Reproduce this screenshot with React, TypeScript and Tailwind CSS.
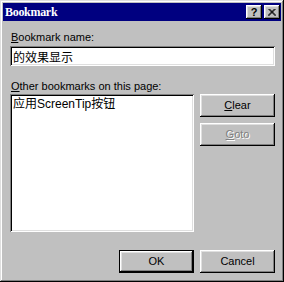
import { ReactNode } from "react";

const raised =
  "shadow-[inset_-1px_-1px_#000000,inset_1px_1px_#ffffff,inset_-2px_-2px_#808080,inset_2px_2px_#dfdfdf]";
const sunken =
  "shadow-[inset_1px_1px_#808080,inset_-1px_-1px_#ffffff,inset_2px_2px_#000000,inset_-2px_-2px_#dfdfdf]";

const Button = ({
  children,
  isDefault,
  disabled,
}: {
  children: ReactNode;
  isDefault?: boolean;
  disabled?: boolean;
}) => {
  const face = (
    <div
      className={`flex h-full w-full items-center justify-center bg-[#c0c0c0] ${raised} ${
        disabled ? "text-[#808080] [text-shadow:1px_1px_#ffffff]" : "text-black"
      }`}
    >
      {children}
    </div>
  );
  if (isDefault) {
    return <div className="h-[23px] w-[75px] border border-black">{face}</div>;
  }
  return <div className="h-[23px] w-[75px]">{face}</div>;
};

const TitleButton = ({ children }: { children: ReactNode }) => (
  <div
    className={`flex h-[14px] w-[16px] items-center justify-center bg-[#c0c0c0] ${raised}`}
  >
    {children}
  </div>
);

const App = () => {
  return (
    <div
      className="h-[282px] w-[284px] bg-[#c0c0c0] p-[3px] text-[11px] leading-[13px] text-black shadow-[inset_-1px_-1px_#000000,inset_1px_1px_#dfdfdf,inset_-2px_-2px_#808080,inset_2px_2px_#ffffff]"
      style={{ fontFamily: '"Liberation Sans", "Noto Sans CJK SC", sans-serif' }}
    >
      <div className="flex h-[18px] items-center justify-between bg-[#000080] pl-[2px] pr-[1px]">
        <span
          className="text-[12px] font-bold tracking-[-0.3px] text-white"
          style={{ fontFamily: '"Liberation Serif", serif' }}
        >
          Bookmark
        </span>
        <div className="flex gap-[2px]">
          <TitleButton>
            <span className="text-[11px] font-bold leading-none">?</span>
          </TitleButton>
          <TitleButton>
            <svg width="8" height="7" viewBox="0 0 8 7">
              <path d="M0.5 0 L7.5 7 M1.5 0 L8 6.5 M7.5 0 L0.5 7 M6.5 0 L0 6.5" stroke="#000" strokeWidth="1" />
            </svg>
          </TitleButton>
        </div>
      </div>

      <div className="flex flex-col pl-[7px] pr-[6px] pt-[10px]">
        <div className="pl-[1px]">
          <span className="underline">B</span>ookmark name:
        </div>
        <div className={`mt-[2px] flex h-[20px] items-center bg-white pl-[3px] ${sunken}`}>
          <span className="text-[12px]" style={{ fontFamily: '"Noto Sans CJK SC", sans-serif' }}>
            的效果显示
          </span>
        </div>

        <div className="mt-[14px] pl-[1px]">
          <span className="underline">O</span>ther bookmarks on this page:
        </div>
        <div className="mt-[1px] flex gap-[6px]">
          <div className={`h-[138px] w-[184px] bg-white px-[3px] pt-[3px] ${sunken}`}>
            <div className="text-[12px] leading-[14px]">应用ScreenTip按钮</div>
          </div>
          <div className="flex flex-col gap-[6px]">
            <Button>
              <span>
                <span className="underline">C</span>lear
              </span>
            </Button>
            <Button disabled>
              <span>
                <span className="underline">G</span>oto
              </span>
            </Button>
          </div>
        </div>

        <div className="mt-[18px] flex justify-end gap-[6px]">
          <Button isDefault>OK</Button>
          <Button>Cancel</Button>
        </div>
      </div>
    </div>
  );
};

export default App;
